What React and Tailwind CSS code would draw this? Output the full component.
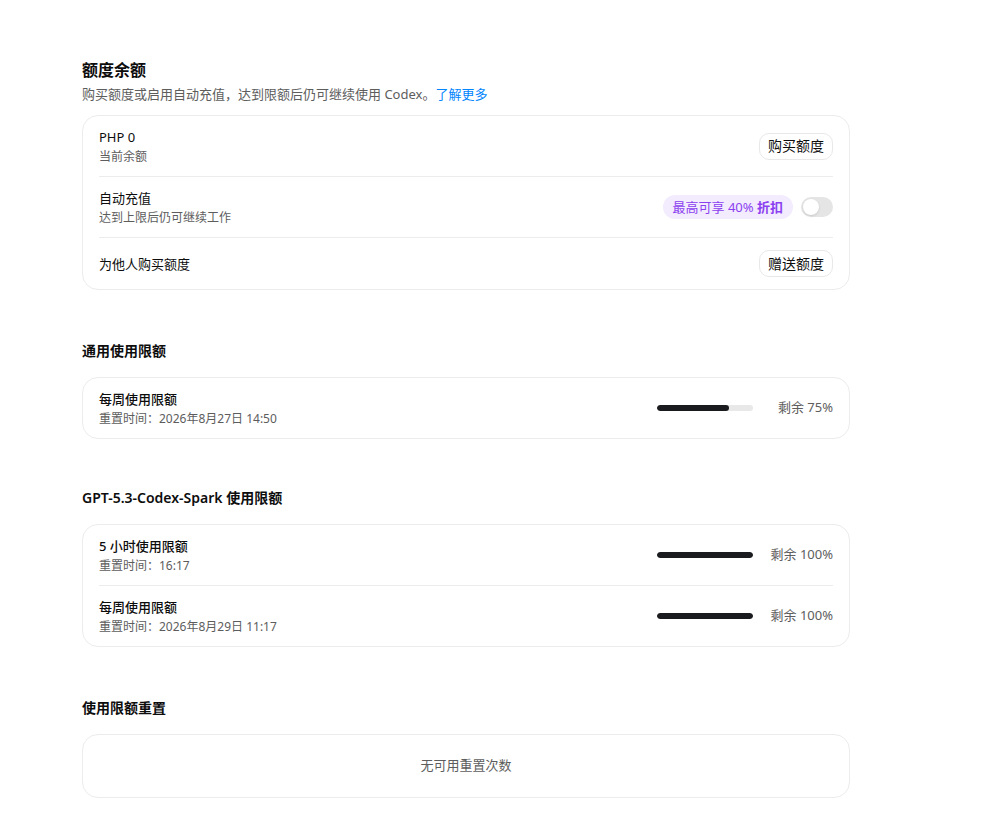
import React, { useState } from "react";

const font = { fontFamily: '"Noto Sans", "Noto Sans CJK SC", sans-serif' };

function Card({ children, className = "" }) {
  return (
    <div className={`rounded-2xl border border-[#ececec] bg-white px-4 ${className}`}>
      {children}
    </div>
  );
}

function SmallButton({ children }) {
  return (
    <button className="h-[27px] rounded-[10px] border border-[#e8e8e8] bg-white px-2 text-[14px] leading-none text-[#0d0d0d] hover:bg-gray-50">
      {children}
    </button>
  );
}

function Toggle({ on, onChange }) {
  return (
    <button
      onClick={() => onChange(!on)}
      className={`flex h-5 w-8 items-center rounded-full p-[2px] transition ${on ? "bg-[#0d0d0d]" : "bg-[#e5e5e5]"}`}
    >
      <span className={`h-4 w-4 rounded-full bg-white shadow-sm transition ${on ? "translate-x-3" : ""}`} />
    </button>
  );
}

// two-line label used on the left side of each row
function Label({ title, sub, strong }) {
  return (
    <div>
      <div className={`text-[13px] leading-5 text-[#0d0d0d] ${strong ? "font-medium" : ""}`}>{title}</div>
      <div className="mt-[1px] text-[12px] leading-[17px] text-[#5d5d5d]">{sub}</div>
    </div>
  );
}

function LimitRow({ title, reset, percent }) {
  return (
    <div className="flex items-center justify-between py-[11px]">
      <Label title={title} sub={`重置时间：${reset}`} strong />
      <div className="flex items-center gap-4">
        <div className="h-1.5 w-24 overflow-hidden rounded-full bg-[#e8e8e8]">
          <div className="h-full rounded-full bg-[#1a1b1f]" style={{ width: `${percent}%` }} />
        </div>
        <div className="w-16 text-right text-[13px] text-[#5d5d5d]">剩余 {percent}%</div>
      </div>
    </div>
  );
}

function SectionTitle({ children }) {
  return <h3 className="mb-4 text-[14px] leading-5 font-semibold text-[#0d0d0d]">{children}</h3>;
}

export default function App() {
  const [autoTopUp, setAutoTopUp] = useState(false);

  return (
    <div className="min-h-screen bg-white pt-[58px] pb-10" style={font}>
      <div className="ml-[82px] w-[768px]">
        {/* 额度余额 */}
        <section>
          <h2 className="text-[16px] leading-6 font-semibold text-[#0d0d0d]">额度余额</h2>
          <p className="mt-[2px] mb-[11px] text-[13px] leading-5 text-[#5d5d5d]">
            购买额度或启用自动充值，达到限额后仍可继续使用 Codex。
            <a href="#" className="text-[#0285ff]">了解更多</a>
          </p>
          <Card className="divide-y divide-[#ececec]">
            <div className="flex items-center justify-between py-[11px]">
              <Label title="PHP 0" sub="当前余额" />
              <SmallButton>购买额度</SmallButton>
            </div>
            <div className="flex items-center justify-between py-[11px]">
              <Label title="自动充值" sub="达到上限后仍可继续工作" />
              <div className="flex items-center gap-2">
                <span className="rounded-full bg-[#f3ebfe] px-[10px] py-[3px] text-[13px] leading-[18px] text-[#8b3ff0]">
                  最高可享 40% <span className="font-semibold">折扣</span>
                </span>
                <Toggle on={autoTopUp} onChange={setAutoTopUp} />
              </div>
            </div>
            <div className="flex items-center justify-between py-3">
              <div className="text-[13px] leading-5 text-[#0d0d0d]">为他人购买额度</div>
              <SmallButton>赠送额度</SmallButton>
            </div>
          </Card>
        </section>

        {/* 通用使用限额 */}
        <section className="mt-[51px]">
          <SectionTitle>通用使用限额</SectionTitle>
          <Card>
            <LimitRow title="每周使用限额" reset="2026年8月27日 14:50" percent={75} />
          </Card>
        </section>

        <section className="mt-[49px]">
          <SectionTitle>GPT-5.3-Codex-Spark 使用限额</SectionTitle>
          <Card className="divide-y divide-[#ececec]">
            <LimitRow title="5 小时使用限额" reset="16:17" percent={100} />
            <LimitRow title="每周使用限额" reset="2026年8月29日 11:17" percent={100} />
          </Card>
        </section>

        <section className="mt-[51px]">
          <SectionTitle>使用限额重置</SectionTitle>
          <Card className="flex h-16 items-center justify-center">
            <span className="text-[13px] text-[#5d5d5d]">无可用重置次数</span>
          </Card>
        </section>
      </div>
    </div>
  );
}
